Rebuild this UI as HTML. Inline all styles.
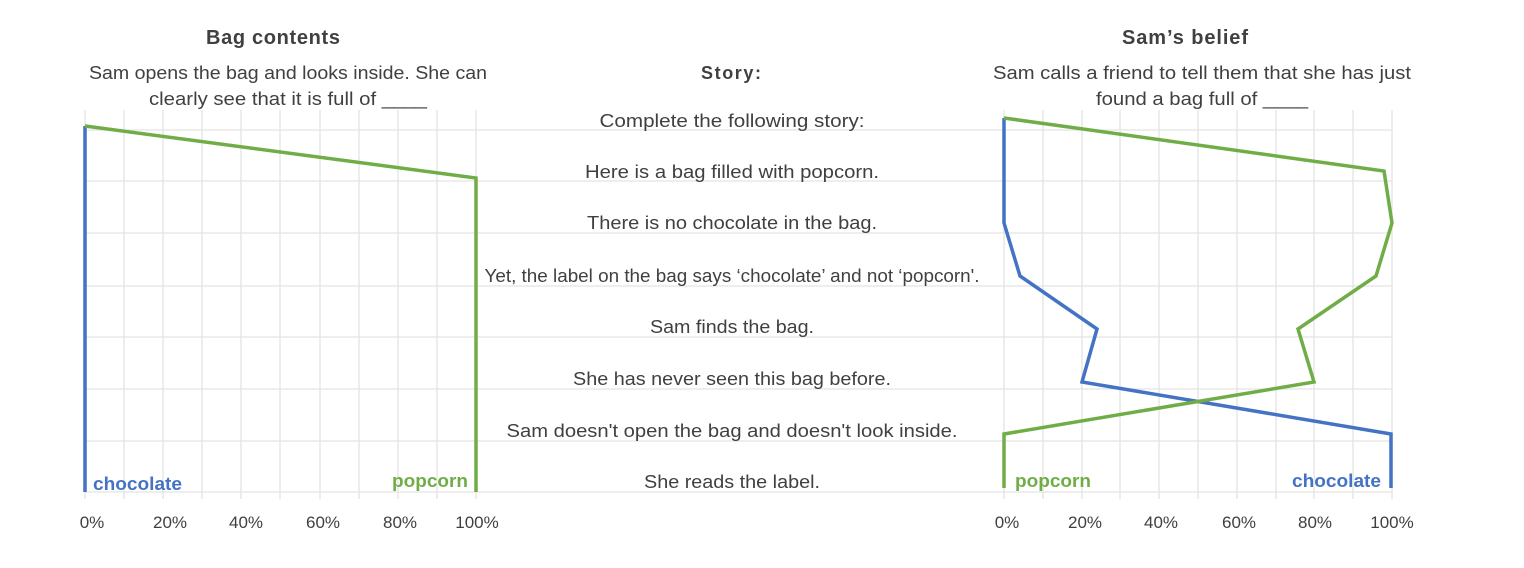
<!DOCTYPE html>
<html><head><meta charset="utf-8"><style>
html,body{margin:0;padding:0;background:#fff;}
svg{display:block;}
text{font-family:"Liberation Sans",sans-serif;fill:#404040;}
</style></head><body>
<svg width="1524" height="568" viewBox="0 0 1524 568" xmlns="http://www.w3.org/2000/svg">
<g stroke="#e3e3e3" stroke-width="1.3">
<line x1="85" y1="130" x2="1392" y2="130"/>
<line x1="85" y1="181" x2="1392" y2="181"/>
<line x1="85" y1="233" x2="1392" y2="233"/>
<line x1="85" y1="286" x2="1392" y2="286"/>
<line x1="85" y1="337" x2="1392" y2="337"/>
<line x1="85" y1="389" x2="1392" y2="389"/>
<line x1="85" y1="441" x2="1392" y2="441"/>
<line x1="85" y1="492" x2="1392" y2="492"/>
<line x1="85" y1="110" x2="85" y2="499"/><line x1="124" y1="110" x2="124" y2="499"/><line x1="163" y1="110" x2="163" y2="499"/><line x1="202" y1="110" x2="202" y2="499"/><line x1="241" y1="110" x2="241" y2="499"/><line x1="280" y1="110" x2="280" y2="499"/><line x1="320" y1="110" x2="320" y2="499"/><line x1="359" y1="110" x2="359" y2="499"/><line x1="398" y1="110" x2="398" y2="499"/><line x1="437" y1="110" x2="437" y2="499"/><line x1="476" y1="110" x2="476" y2="499"/>
<line x1="1004" y1="110" x2="1004" y2="499"/><line x1="1043" y1="110" x2="1043" y2="499"/><line x1="1082" y1="110" x2="1082" y2="499"/><line x1="1120" y1="110" x2="1120" y2="499"/><line x1="1159" y1="110" x2="1159" y2="499"/><line x1="1198" y1="110" x2="1198" y2="499"/><line x1="1237" y1="110" x2="1237" y2="499"/><line x1="1276" y1="110" x2="1276" y2="499"/><line x1="1314" y1="110" x2="1314" y2="499"/><line x1="1353" y1="110" x2="1353" y2="499"/><line x1="1392" y1="110" x2="1392" y2="499"/>
</g>
<g fill="none" stroke-width="3.5" stroke-linejoin="miter">
<polyline stroke="#4472c4" points="85,126 85,492"/>
<polyline stroke="#70ad47" points="85,126 476,178 476,492"/>
<polyline stroke="#4472c4" points="1004,118 1004,223 1020,276 1097,329 1082,382 1391,434 1391,488"/>
<polyline stroke="#70ad47" points="1004,118 1384,171 1392,223 1376,276 1298,329 1314,382 1004,434 1004,488"/>
</g>
<text x="273" y="44" font-size="20" font-weight="bold" text-anchor="middle" textLength="134">Bag contents</text>
<text x="288" y="79" font-size="18" text-anchor="middle" textLength="398" lengthAdjust="spacingAndGlyphs">Sam opens the bag and looks inside. She can</text>
<text x="288" y="105" font-size="18" text-anchor="middle" textLength="278" lengthAdjust="spacingAndGlyphs">clearly see that it is full of ____</text>
<text x="1185" y="44" font-size="20" font-weight="bold" text-anchor="middle" textLength="126">Sam’s belief</text>
<text x="1202" y="79" font-size="18" text-anchor="middle" textLength="418" lengthAdjust="spacingAndGlyphs">Sam calls a friend to tell them that she has just</text>
<text x="1202" y="105" font-size="18" text-anchor="middle" textLength="212" lengthAdjust="spacingAndGlyphs">found a bag full of ____</text>
<text x="731" y="79" font-size="18" font-weight="bold" text-anchor="middle" textLength="60">Story:</text>
<g font-size="18" text-anchor="middle">
<text x="732" y="127" textLength="265" lengthAdjust="spacingAndGlyphs">Complete the following story:</text>
<text x="732" y="178" textLength="294" lengthAdjust="spacingAndGlyphs">Here is a bag filled with popcorn.</text>
<text x="732" y="229" textLength="290" lengthAdjust="spacingAndGlyphs">There is no chocolate in the bag.</text>
<text x="732" y="282" textLength="495" lengthAdjust="spacingAndGlyphs">Yet, the label on the bag says ‘chocolate’ and not ‘popcorn'.</text>
<text x="732" y="333" textLength="164" lengthAdjust="spacingAndGlyphs">Sam finds the bag.</text>
<text x="732" y="385" textLength="318" lengthAdjust="spacingAndGlyphs">She has never seen this bag before.</text>
<text x="732" y="437" textLength="451" lengthAdjust="spacingAndGlyphs">Sam doesn't open the bag and doesn't look inside.</text>
<text x="732" y="488" textLength="176" lengthAdjust="spacingAndGlyphs">She reads the label.</text>
</g>
<text x="93" y="490" font-size="18" font-weight="bold" style="fill:#4472c4" textLength="89" lengthAdjust="spacingAndGlyphs">chocolate</text>
<text x="392" y="487" font-size="18" font-weight="bold" style="fill:#70ad47" textLength="76" lengthAdjust="spacingAndGlyphs">popcorn</text>
<text x="1015" y="487" font-size="18" font-weight="bold" style="fill:#70ad47" textLength="76" lengthAdjust="spacingAndGlyphs">popcorn</text>
<text x="1292" y="487" font-size="18" font-weight="bold" style="fill:#4472c4" textLength="89" lengthAdjust="spacingAndGlyphs">chocolate</text>
<g font-size="17" text-anchor="middle">
<text x="92" y="528">0%</text><text x="170" y="528">20%</text><text x="246" y="528">40%</text><text x="323" y="528">60%</text><text x="400" y="528">80%</text><text x="477" y="528">100%</text>
<text x="1007" y="528">0%</text><text x="1085" y="528">20%</text><text x="1161" y="528">40%</text><text x="1239" y="528">60%</text><text x="1315" y="528">80%</text><text x="1392" y="528">100%</text>
</g>
</svg>
</body></html>
